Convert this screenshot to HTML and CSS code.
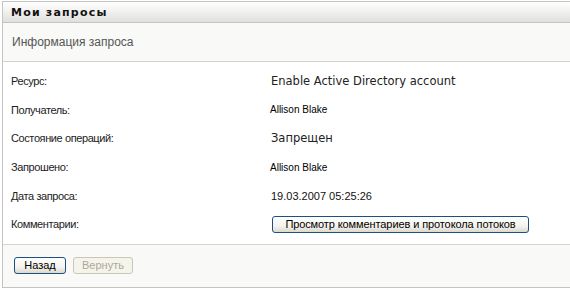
FILE: index.html
```html
<!DOCTYPE html>
<html lang="ru">
<head>
    <meta charset="UTF-8">
    <title>Мои запросы</title>
    <link rel="stylesheet" href="styles.css">
</head>
<body>
<div class="portlet">
    <div class="portlet-title">Мои запросы</div>
    <div class="portlet-sub">Информация запроса</div>

    <div class="details">
        <div class="label">Ресурс:</div>
        <div class="value big">Enable Active Directory account</div>

        <div class="label">Получатель:</div>
        <div class="value small">Allison Blake</div>

        <div class="label">Состояние операций:</div>
        <div class="value big">Запрещен</div>

        <div class="label">Запрошено:</div>
        <div class="value small">Allison Blake</div>

        <div class="label">Дата запроса:</div>
        <div class="value">19.03.2007 05:25:26</div>

        <div class="label">Комментарии:</div>
        <div class="value"><button class="btn btn-wide">Просмотр комментариев и протокола потоков</button></div>
    </div>

    <div class="footer">
        <button class="btn btn-back">Назад</button>
        <button class="btn btn-off" disabled>Вернуть</button>
    </div>
</div>
</body>
</html>
```

FILE: styles.css
```css
* {
    box-sizing: border-box;
}

body {
    margin: 0;
    background: #fff;
    font-family: "Liberation Sans", Arial, sans-serif;
    font-size: 11px;
    color: #222;
    overflow: hidden;
}

.portlet {
    margin: 1px 0 0 2px;
    border-left: 1px solid #c4c4c4;
    border-top: 1px solid #c4c4c4;
    border-bottom: 1px solid #c4c4c4;
}

.portlet-title {
    height: 21px;
    line-height: 21px;
    padding-left: 8px;
    font-family: "DejaVu Sans", Verdana, sans-serif;
    font-weight: bold;
    font-size: 11px;
    letter-spacing: 1.2px;
    color: #111;
    background: linear-gradient(#ffffff, #f3f3f1 40%, #dfe0dd);
    border-bottom: 1px solid #c4c4c4;
}

.portlet-sub {
    height: 39px;
    line-height: 39px;
    padding-left: 9px;
    font-size: 12px;
    color: #555;
    background: #f9f9f7;
    border-bottom: 1px solid #d2d2d2;
}

.details {
    display: grid;
    grid-template-columns: 268px 1fr;
    grid-auto-rows: 28.6px;
    align-items: center;
    padding: 5px 0 5px 0;
    border-bottom: 1px solid #d6d6d6;
}

.label {
    padding-left: 8px;
    font-size: 11px;
    letter-spacing: -0.4px;
    color: #222;
}

.value {
    font-size: 11px;
    color: #111;
}

.value.big {
    font-family: "DejaVu Sans", Verdana, sans-serif;
    font-size: 11.5px;
    color: #222;
}

.value.small {
    font-size: 10px;
    color: #000;
    margin-left: -1px;
}

.btn {
    font-family: "Liberation Sans", Arial, sans-serif;
    font-size: 11px;
    height: 17px;
    padding: 0;
    color: #000;
    border: 1px solid #1c4f86;
    border-radius: 3px;
    background: linear-gradient(#ffffff, #f4f3ee 60%, #dcd9cc);
    line-height: 15px;
    margin: 0;
    white-space: nowrap;
}

.btn-wide {
    width: 257px;
    margin-left: 1px;
    letter-spacing: -0.1px;
}

.footer {
    height: 42px;
    padding: 12px 0 0 11px;
    background: #f9f9f7;
    display: flex;
    gap: 7px;
    align-items: flex-start;
}

.btn-back {
    width: 52px;
}

.btn-off {
    width: 60px;
    color: #aca899;
    border-color: #c9c7ba;
    background: #f5f4ea;
}
```
